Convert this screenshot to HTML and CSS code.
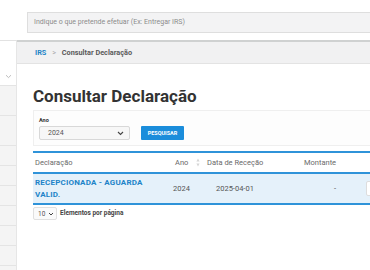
FILE: index.html
```html
<!DOCTYPE html>
<html lang="pt">
<head>
    <meta charset="UTF-8">
    <title>Consultar Declaração</title>
    <link rel="stylesheet" href="styles.css">
</head>
<body>

<div class="topbar">
    <div class="search">Indique o que pretende efetuar (Ex: Entregar IRS)</div>
</div>

<div class="layout">
    <aside class="sidebar">
        <div class="side-head">
            <svg width="7" height="5" viewBox="0 0 7 5"><path d="M1 1.2 L3.5 3.6 L6 1.2" fill="none" stroke="#b5b5b5" stroke-width="0.9"/></svg>
        </div>
        <div class="side-item tall"></div>
        <div class="side-item tall"></div>
        <div class="side-item"></div>
        <div class="side-item"></div>
        <div class="side-item"></div>
        <div class="side-item"></div>
        <div class="side-item"></div>
        <div class="side-item"></div>
    </aside>

    <main class="main">
        <div class="breadcrumb">
            <span class="crumb-link">IRS</span>
            <span class="crumb-sep">&gt;</span>
            <span class="crumb-current">Consultar Declaração</span>
        </div>

        <div class="content">
            <h1>Consultar Declaração</h1>

            <div class="filters">
                <label class="field-label">Ano</label>
                <div class="filter-row">
                    <div class="select year">
                        <span>2024</span>
                        <svg width="7" height="5" viewBox="0 0 7 5"><path d="M1 1 L3.5 3.5 L6 1" fill="none" stroke="#444" stroke-width="1.1"/></svg>
                    </div>
                    <button class="btn-search">PESQUISAR</button>
                </div>
            </div>

            <div class="table">
                <div class="thead">
                    <div class="th c1">Declaração</div>
                    <div class="th c2">Ano
                        <svg class="sort" width="4" height="9" viewBox="0 0 4 9"><path d="M2 0.5 L3.6 3.5 H0.4 Z M2 8.5 L3.6 5.5 H0.4 Z" fill="#d6d6d6"/></svg>
                    </div>
                    <div class="th c3">Data de Receção</div>
                    <div class="th c4">Montante</div>
                    <div class="th c5"></div>
                </div>
                <div class="trow">
                    <div class="td c1 status">RECEPCIONADA - AGUARDA VALID.</div>
                    <div class="td c2">2024</div>
                    <div class="td c3">2025-04-01</div>
                    <div class="td c4 amount">-</div>
                    <div class="td c5"><span class="row-btn"></span></div>
                </div>
            </div>

            <div class="pager">
                <div class="select per-page">
                    <span>10</span>
                    <svg width="6" height="4" viewBox="0 0 6 4"><path d="M1 1 L3 3 L5 1" fill="none" stroke="#444" stroke-width="1"/></svg>
                </div>
                <span class="pager-label">Elementos por página</span>
            </div>
        </div>
    </main>
</div>

</body>
</html>
```

FILE: styles.css
```css
body {
    margin: 0;
    padding: 0;
    width: 370px;
    height: 270px;
    overflow: hidden;
    font-family: Roboto, "Liberation Sans", sans-serif;
    background: #ffffff;
    color: #333;
}
.topbar {
    height: 40px;
    padding: 12px 0 0 27px;
    box-sizing: border-box;
}
.search {
    width: 420px;
    height: 21px;
    box-sizing: border-box;
    background: #f3f3f4;
    border: 1px solid #dedede;
    font-size: 7px;
    line-height: 19px;
    padding-left: 6px;
    color: #8c8c8c;
}
.layout {
    display: flex;
    width: 460px;
}
.sidebar {
    width: 17px;
    flex: none;
    border-top: 1px solid #e2e2e2;
    border-right: 1px solid #e6e6e6;
    box-sizing: border-box;
    background: #f4f4f4;
    height: 240px;
}
.side-head {
    height: 45px;
    background: #fff;
    display: flex;
    justify-content: center;
    align-items: flex-end;
    padding-bottom: 6px;
    box-sizing: border-box;
    border-bottom: 1px solid #e4e4e4;
}
.side-item {
    height: 19px;
    border-bottom: 1px solid #e4e4e4;
}
.side-item.tall {
    height: 29px;
}
.main {
    flex: 1;
}
.breadcrumb {
    height: 24px;
    box-sizing: border-box;
    border-top: 2px solid #cfd1d1;
    border-bottom: 1px solid #e3e3e3;
    background: #f1f1f2;
    font-size: 7.3px;
    font-weight: bold;
    line-height: 21px;
    padding-left: 18px;
}
.crumb-link {
    color: #2484c6;
}
.crumb-sep {
    color: #aaa;
    font-weight: normal;
    margin: 0 4px;
}
.crumb-current {
    color: #5a5a5a;
}
.content {
    padding-left: 16px;
}
h1 {
    margin: 0;
    padding-top: 22px;
    font-size: 17px;
    line-height: 20px;
    font-weight: bold;
    color: #333;
}
.filters {
    margin-top: 4px;
    height: 36px;
    box-sizing: border-box;
    border: 1px solid #efefef;
    background: #fdfdfd;
    padding: 6px 0 0 5px;
}
.field-label {
    display: block;
    font-size: 5.5px;
    font-weight: bold;
    color: #333;
    line-height: 7px;
}
.filter-row {
    display: flex;
    gap: 11px;
    margin-top: 2px;
}
.select {
    display: flex;
    align-items: center;
    justify-content: space-between;
    box-sizing: border-box;
    border: 1px solid #d8d8d8;
    border-radius: 2px;
    background: #f7f7f7;
    color: #555;
}
.select svg {
    flex: none;
}
.select.year {
    width: 91px;
    height: 14px;
    font-size: 7px;
    padding: 0 5px 0 8px;
}
.btn-search {
    width: 43px;
    height: 14px;
    padding: 0;
    border: none;
    border-radius: 1px;
    background: #1b8ddb;
    color: #fff;
    font-family: inherit;
    font-size: 5.5px;
    font-weight: bold;
}
.table {
    margin-top: 5px;
    width: 400px;
    border-top: 2px solid #2f93d9;
}
.thead, .trow {
    display: grid;
    grid-template-columns: 140px 34px 96px 62px 68px;
    align-items: center;
}
.thead {
    height: 19px;
    border-bottom: 2px solid #2f93d9;
    font-size: 7.5px;
    color: #6a6a6a;
}
.th {
    padding-left: 2px;
}
.th.c2 {
    display: flex;
    align-items: center;
    gap: 8px;
}
.th.c3 {
    padding-left: 0;
}
.th.c4 {
    padding-left: 1px;
}
.trow {
    height: 29px;
    background: #e5f1fa;
    border-bottom: 2px solid #2f93d9;
    font-size: 7.5px;
    color: #555;
}
.td.c1 {
    padding-left: 2px;
}
.status {
    color: #2183c8;
    font-weight: bold;
    font-size: 8px;
    line-height: 12px;
    letter-spacing: 0.2px;
    width: 122px;
}
.td.c3 {
    padding-left: 9px;
}
.amount {
    padding-left: 31px;
}
.row-btn {
    display: block;
    width: 14px;
    height: 13px;
    margin-left: 1px;
    background: #fff;
    border: 1px solid #ddd;
    border-radius: 2px;
}
.pager {
    display: flex;
    align-items: center;
    gap: 3px;
    margin-top: 2px;
}
.select.per-page {
    width: 24px;
    flex: none;
    height: 13px;
    font-size: 6.5px;
    padding: 0 2px 0 4px;
    background: #fafafa;
    border-color: #e0e0e0;
}
.pager-label {
    font-size: 6.5px;
    font-weight: bold;
    color: #444;
    margin-top: -1px;
}
```
